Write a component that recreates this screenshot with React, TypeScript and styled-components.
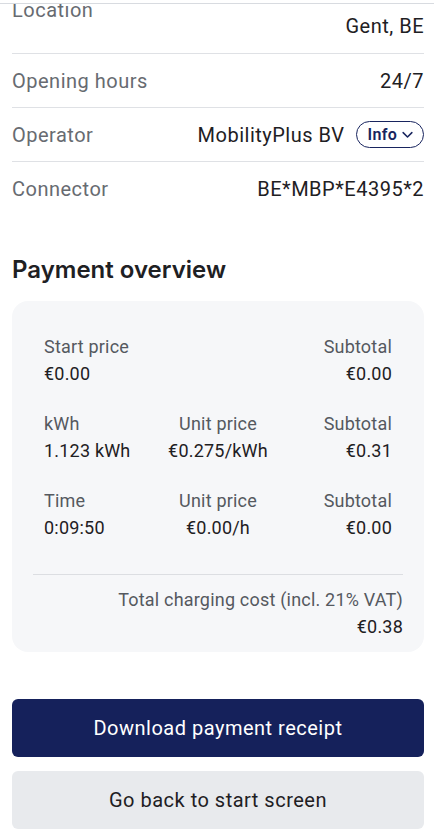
import React from 'react';
import styled, { createGlobalStyle } from 'styled-components';

const GlobalStyle = createGlobalStyle`
    * { box-sizing: border-box; }
    body {
        margin: 0;
        background: #ffffff;
        font-family: Roboto, "Noto Sans", "Liberation Sans", sans-serif;
        color: #1e2023;
    }
`;

interface DetailRow {
    label: string;
    value: string;
    info?: boolean;
}

const details: DetailRow[] = [
    { label: 'Opening hours', value: '24/7' },
    { label: 'Operator', value: 'MobilityPlus BV', info: true },
    { label: 'Connector', value: 'BE*MBP*E4395*2' },
];

const lines = [
    { a: 'Start price', av: '€0.00', b: '', bv: '', c: 'Subtotal', cv: '€0.00' },
    { a: 'kWh', av: '1.123 kWh', b: 'Unit price', bv: '€0.275/kWh', c: 'Subtotal', cv: '€0.31' },
    { a: 'Time', av: '0:09:50', b: 'Unit price', bv: '€0.00/h', c: 'Subtotal', cv: '€0.00' },
];

export default function App() {
    return (<>
        <GlobalStyle />
        <TopEdge />
        <Page>
            <LocationRow>
                <Label>Location</Label>
                <StackedValue>Gent, BE</StackedValue>
            </LocationRow>
            { details.map((d, i) => (
                <Row key={d.label} last={i === details.length - 1}>
                    <Label>{ d.label }</Label>
                    <ValueWrap>
                        <Value>{ d.value }</Value>
                        { d.info && <InfoPill>
                            Info
                            <svg width="15" height="15" viewBox="0 0 24 24" fill="none" stroke="currentColor" strokeWidth="2.4" strokeLinecap="round" strokeLinejoin="round">
                                <path d="M5 9l7 7 7-7" />
                            </svg>
                        </InfoPill> }
                    </ValueWrap>
                </Row>
            ))}

            <Heading>Payment overview</Heading>
            <Card>
                <Grid>
                    { lines.map((l) => (
                        <Group key={l.a}>
                            <Cell align="left">
                                <CellLabel>{ l.a }</CellLabel>
                                <CellValue>{ l.av }</CellValue>
                            </Cell>
                            <Cell align="center">
                                <CellLabel>{ l.b }</CellLabel>
                                <CellValue>{ l.bv }</CellValue>
                            </Cell>
                            <Cell align="right">
                                <CellLabel>{ l.c }</CellLabel>
                                <CellValue>{ l.cv }</CellValue>
                            </Cell>
                        </Group>
                    ))}
                </Grid>
                <Total>
                    <CellLabel>Total charging cost (incl. 21% VAT)</CellLabel>
                    <CellValue>€0.38</CellValue>
                </Total>
            </Card>

            <Actions>
                <Button variant="primary">Download payment receipt</Button>
                <Button variant="secondary">Go back to start screen</Button>
            </Actions>
        </Page>
    </>);
}

const TopEdge = styled.div`
    position: fixed;
    top: 0;
    left: 0;
    right: 11px;
    height: 4px;
    background: #ffffff;
    border-bottom: 1px solid #d8dbe0;
    z-index: 2;
`;

const Page = styled.div`
    padding: 0 21px 20px 12px;
    margin-top: -2px;
`;

const Label = styled.div`
    font-size: 20px;
    line-height: 24px;
    letter-spacing: 0.5px;
    color: #676b71;
`;

const Value = styled.div`
    font-size: 20px;
    line-height: 24px;
    letter-spacing: 0.5px;
    color: #1e2023;
`;

const LocationRow = styled.div`
    display: flex;
    flex-direction: column;
    padding-bottom: 15px;
    border-bottom: 1px solid #dfe1e5;
`;

const StackedValue = styled(Value)`
    align-self: flex-end;
    margin-top: -8px;
`;

const Row = styled.div<{ last: boolean }>`
    display: flex;
    align-items: center;
    justify-content: space-between;
    height: 54px;
    border-bottom: ${props => props.last ? 'none' : '1px solid #dfe1e5'};
`;

const ValueWrap = styled.div`
    display: flex;
    align-items: center;
    gap: 11px;
`;

const InfoPill = styled.button`
    display: flex;
    align-items: center;
    gap: 3px;
    height: 27px;
    padding: 0 8px 0 11px;
    border: 1.5px solid #18245e;
    border-radius: 999px;
    background: transparent;
    color: #18245e;
    font-family: inherit;
    font-size: 16px;
    font-weight: 600;
    letter-spacing: 0.3px;
`;

const Heading = styled.h2`
    margin: 38px 0 15px;
    font-family: Inter, Roboto, sans-serif;
    font-size: 24px;
    line-height: 32px;
    font-weight: 600;
    color: #1e2023;
`;

const Card = styled.div`
    background: #f6f7f9;
    border-radius: 16px;
    padding: 32px 21px 12px;
`;

const Grid = styled.div`
    display: flex;
    flex-direction: column;
    gap: 23px;
    padding: 0 11px;
`;

const Group = styled.div`
    display: grid;
    grid-template-columns: 1fr 1fr 1fr;
`;

const Cell = styled.div<{ align: 'left' | 'center' | 'right' }>`
    display: flex;
    flex-direction: column;
    text-align: ${props => props.align};
`;

const CellLabel = styled.div`
    font-size: 18px;
    line-height: 27px;
    min-height: 27px;
    letter-spacing: 0.2px;
    color: #55595f;
`;

const CellValue = styled.div`
    font-size: 18px;
    line-height: 27px;
    letter-spacing: 0.2px;
    color: #1e2023;
`;

const Total = styled.div`
    margin-top: 33px;
    padding-top: 11px;
    border-top: 1.5px solid #dcdee2;
    text-align: right;
`;

const Actions = styled.div`
    display: flex;
    flex-direction: column;
    gap: 14px;
    margin-top: 47px;
`;

const Button = styled.button<{ variant: 'primary' | 'secondary' }>`
    height: 58px;
    border: none;
    border-radius: 6px;
    font-family: inherit;
    font-size: 20px;
    letter-spacing: 0.5px;
    background: ${props => props.variant === 'primary' ? '#15215b' : '#e8eaed'};
    color: ${props => props.variant === 'primary' ? '#ffffff' : '#1e2023'};
`;
